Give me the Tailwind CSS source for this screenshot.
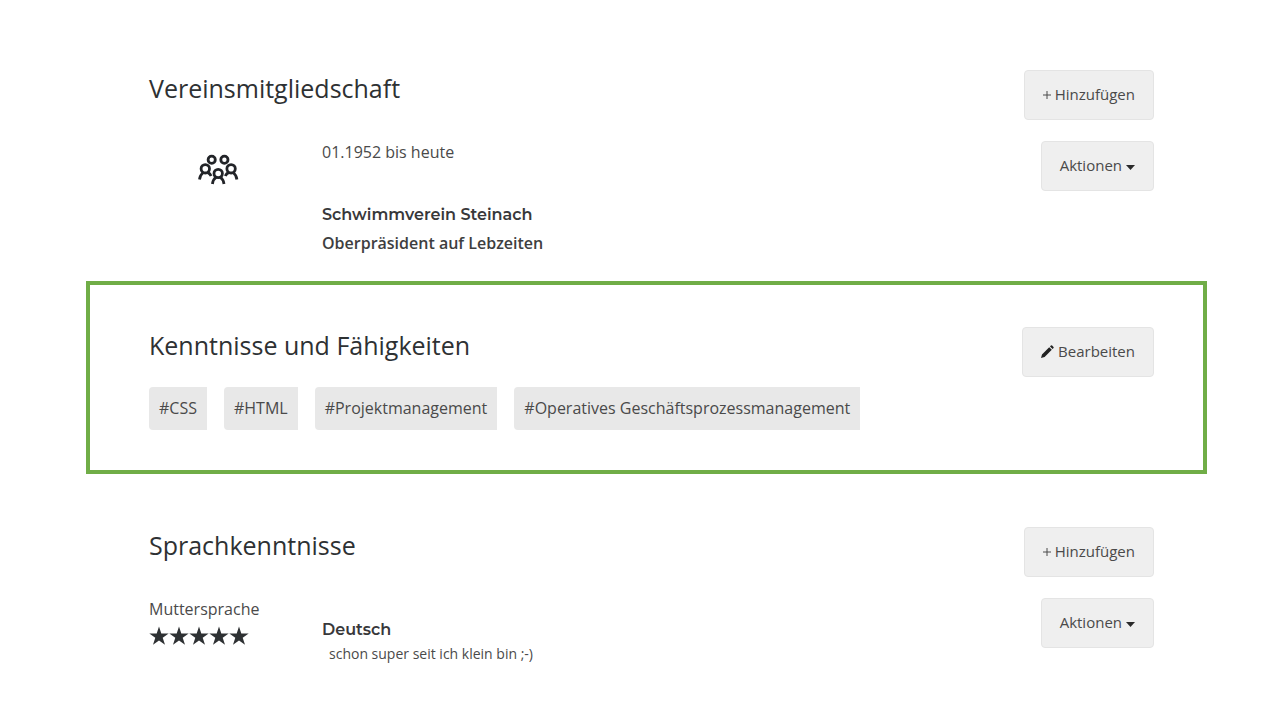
<!DOCTYPE html>
<html lang="de">
<head>
<meta charset="utf-8">
<meta name="viewport" content="width=device-width, initial-scale=1">
<title>Lebenslauf</title>
<script src="https://cdn.jsdelivr.net/npm/@tailwindcss/browser@4"></script>
</head>
<body class="bg-white font-['Open_Sans',sans-serif] text-base text-[#4a4a4a]">
<svg class="hidden" aria-hidden="true">
  <symbol id="star" viewBox="0 0 20 20"><path d="M10 0.5l2.300 7h7.400l-6 4.300 2.300 7L10 14.500l-6 4.300 2.300-7L0.300 7.500h7.400z"/></symbol>
</svg>
<main class="pt-[70px] pr-[73px] pl-[86px]">
  <section class="pr-[53px] pb-[23px] pl-[63px]">
    <div class="flex items-start justify-between">
      <h2 class="text-[25px] leading-9 text-[#2e3133]">Vereinsmitgliedschaft</h2>
      <button type="button" class="flex h-[50px] items-center gap-1 rounded border border-[#e4e4e4] bg-[#efefef] px-[18px] pb-0.5 text-[15px]">
        <svg class="mt-0.5 size-2" viewBox="0 0 8 8" fill="none" stroke="#4a4a4a" stroke-width="1" aria-hidden="true"><path d="M4 0v8M0 4h8"/></svg>Hinzufügen
      </button>
    </div>
    <div class="mt-[21px] flex items-start">
      <div class="flex w-[173px] shrink-0 pt-3 pl-12">
        <svg class="h-8 w-[42px]" viewBox="0 0 42 32" fill="none" stroke="#222428" stroke-width="2.8" aria-hidden="true">
          <circle cx="14.700" cy="6.800" r="3.600"/><circle cx="27.400" cy="6.800" r="3.600"/>
          <circle cx="8.300" cy="15.800" r="4.200"/><circle cx="34.100" cy="15.800" r="4.200"/>
          <circle cx="21.200" cy="20.500" r="4.200"/>
          <path d="M2.500 26.500c.3-3.300 1.600-5.300 3.800-7M10.500 19.400c1.800.8 3 2 3.600 3.500M39.900 26.500c-.3-3.300-1.600-5.300-3.800-7M31.900 19.400c-1.800.8-3 2-3.600 3.500M15.400 31c.3-3.300 1.600-5.200 3.800-6.800M27 31c-.3-3.300-1.600-5.200-3.800-6.800"/>
        </svg>
      </div>
      <div class="grow">
        <p class="leading-[22px]">01.1952 bis heute</p>
        <h3 class="mt-[37px] font-[Montserrat,Inter,sans-serif] text-base leading-[29px] font-semibold text-[#38383a]">Schwimmverein Steinach</h3>
        <p class="leading-[29px] font-semibold text-[#3e3e40]">Oberpräsident auf Lebzeiten</p>
      </div>
      <button type="button" class="flex h-[50px] items-center gap-1 rounded border border-[#e4e4e4] bg-[#efefef] px-[18px] pb-0.5 text-[15px]">
        Aktionen<svg class="mt-1 h-[5px] w-[9px]" viewBox="0 0 9 5" fill="#2a2a2a" aria-hidden="true"><path d="M0 0h9L4.500 5z"/></svg>
      </button>
    </div>
  </section>

  <section class="border-4 border-[#70ad47] pt-[42px] pr-[49px] pb-10 pl-[59px]">
    <div class="flex items-start justify-between">
      <h2 class="text-[25px] leading-9 text-[#2e3133]">Kenntnisse und Fähigkeiten</h2>
      <button type="button" class="flex h-[50px] items-center gap-1 rounded border border-[#e4e4e4] bg-[#efefef] px-[18px] pb-0.5 text-[15px]">
        <svg class="size-[13px]" viewBox="0 0 13 13" fill="#222" aria-hidden="true"><path d="M0 13l1-3.600L8.200 2.200l2.600 2.600L3.600 12zM9 1.400l.9-.9q.6-.5 1.200 0l1.400 1.400q.5.6 0 1.200l-.9.900z"/></svg>Bearbeiten
      </button>
    </div>
    <ul class="mt-[10px] flex flex-wrap gap-[17px]">
      <li class="rounded-l bg-[#e8e8e8] px-[10px] leading-[43px]">#CSS</li>
      <li class="rounded-l bg-[#e8e8e8] px-[10px] leading-[43px]">#HTML</li>
      <li class="rounded-l bg-[#e8e8e8] px-[10px] leading-[43px]">#Projektmanagement</li>
      <li class="rounded-l bg-[#e8e8e8] px-[10px] leading-[43px]">#Operatives Geschäftsprozessmanagement</li>
    </ul>
  </section>

  <section class="mt-[53px] pr-[53px] pl-[63px]">
    <div class="flex items-start justify-between">
      <h2 class="text-[25px] leading-9 text-[#2e3133]">Sprachkenntnisse</h2>
      <button type="button" class="flex h-[50px] items-center gap-1 rounded border border-[#e4e4e4] bg-[#efefef] px-[18px] pb-0.5 text-[15px]">
        <svg class="mt-0.5 size-2" viewBox="0 0 8 8" fill="none" stroke="#4a4a4a" stroke-width="1" aria-hidden="true"><path d="M4 0v8M0 4h8"/></svg>Hinzufügen
      </button>
    </div>
    <div class="mt-[21px] flex items-start">
      <div class="w-[173px] shrink-0">
        <p class="leading-[22px]">Muttersprache</p>
        <div class="mt-[6px] flex fill-[#2e3133]" role="img" aria-label="5 von 5 Sternen">
          <svg class="size-5"><use href="#star"/></svg>
          <svg class="size-5"><use href="#star"/></svg>
          <svg class="size-5"><use href="#star"/></svg>
          <svg class="size-5"><use href="#star"/></svg>
          <svg class="size-5"><use href="#star"/></svg>
        </div>
      </div>
      <div class="grow pt-5">
        <h3 class="font-[Montserrat,Inter,sans-serif] text-base leading-6 font-semibold text-[#38383a]">Deutsch</h3>
        <p class="pl-[7px] text-sm leading-6">schon super seit ich klein bin ;-)</p>
      </div>
      <button type="button" class="flex h-[50px] items-center gap-1 rounded border border-[#e4e4e4] bg-[#efefef] px-[18px] pb-0.5 text-[15px]">
        Aktionen<svg class="mt-1 h-[5px] w-[9px]" viewBox="0 0 9 5" fill="#2a2a2a" aria-hidden="true"><path d="M0 0h9L4.500 5z"/></svg>
      </button>
    </div>
  </section>
</main>
</body>
</html>
